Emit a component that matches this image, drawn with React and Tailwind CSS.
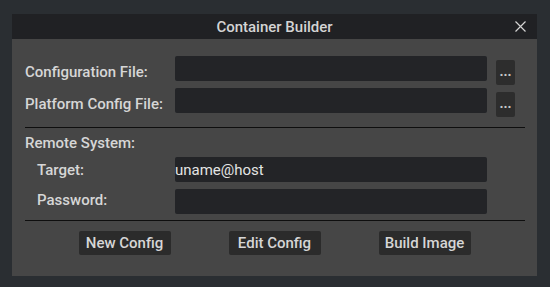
import React from 'react';

function BrowseButton() {
  return (
    <button className="mt-[4px] ml-[9px] w-[19px] h-[25px] rounded-[2px] bg-[#2d2d2d] text-[#c8c8c8] text-[14px] leading-[20px] font-bold flex items-end justify-center pb-[4px] shrink-0">
      ...
    </button>
  );
}

function FileRow({ label, className = '' }) {
  return (
    <div className={'flex items-start h-[25px] ' + className}>
      <div className="w-[150px] mt-[6px] leading-[20px] shrink-0">{label}</div>
      <input className="w-[312px] h-[25px] rounded-[2px] bg-[#232427] outline-none text-[#e0e0e0] font-normal shrink-0" />
      <BrowseButton />
    </div>
  );
}

function RemoteRow({ label, value = '', type = 'text', labelTop, className = '' }) {
  return (
    <div className={'flex items-start h-[25px] ' + className}>
      <div className={'w-[150px] pl-[12px] leading-[20px] shrink-0 ' + labelTop}>{label}</div>
      <input
        type={type}
        defaultValue={value}
        className="w-[312px] h-[25px] rounded-[2px] bg-[#232427] outline-none text-[#e4e4e4] font-normal shrink-0"
      />
    </div>
  );
}

export default function App() {
  return (
    <div className="w-[550px] h-[287px] bg-[#2a2e32] pt-[14px] pl-[12px] font-['Roboto',sans-serif] text-[15px] font-medium text-[#d6d6d6]">
      <div className="w-[525px] h-[262px] bg-[#464646] flex flex-col">
        {/* title bar */}
        <div className="h-[25px] bg-[#202124] flex items-center justify-center relative">
          <span className="text-[#d4d4d4] leading-[20px]">Container Builder</span>
          <svg className="absolute left-[503px] top-[7px]" width="11" height="11" viewBox="0 0 11 11">
            <path d="M0.5 0.5 L10.5 10.5 M10.5 0.5 L0.5 10.5" stroke="#d4d4d4" strokeWidth="1.2" />
          </svg>
        </div>

        <div className="pl-[13px] pr-[12px] pt-[17px] flex flex-col">
          <FileRow label="Configuration File:" />
          <FileRow label="Platform Config File:" className="mt-[7px]" />

          <div className="mt-[14px] h-px bg-[#0e0e0e]" />

          <div className="mt-[5px] h-[20px] leading-[20px]">Remote System:</div>

          <RemoteRow label="Target:" value="uname@host" labelTop="mt-[3px]" className="mt-[4px]" />
          <RemoteRow label="Password:" type="password" labelTop="mt-[1px]" className="mt-[7px]" />

          <div className="mt-[6px] h-px bg-[#0e0e0e]" />

          <div className="mt-[10px] flex justify-center gap-[58px] pr-[1px]">
            <button className="w-[92px] h-[24px] rounded-[2px] bg-[#2b2b2b] text-[#d6d6d6] leading-[20px]">New Config</button>
            <button className="w-[92px] h-[24px] rounded-[2px] bg-[#2b2b2b] text-[#d6d6d6] leading-[20px]">Edit Config</button>
            <button className="w-[92px] h-[24px] rounded-[2px] bg-[#2b2b2b] text-[#d6d6d6] leading-[20px]">Build Image</button>
          </div>
        </div>
      </div>
    </div>
  );
}
